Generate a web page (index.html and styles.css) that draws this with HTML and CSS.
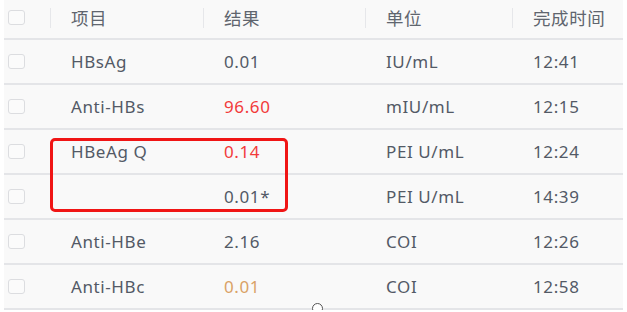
FILE: index.html
```html
<!DOCTYPE html>
<html lang="zh">
<head>
<meta charset="utf-8">
<link rel="stylesheet" href="styles.css">
</head>
<body>
<div class="table">
  <div class="row head">
    <div class="cell chk"><span class="box"></span></div>
    <div class="cell sep">项目</div>
    <div class="cell sep">结果</div>
    <div class="cell sep">单位</div>
    <div class="cell sep">完成时间</div>
  </div>
  <div class="row">
    <div class="cell chk"><span class="box"></span></div>
    <div class="cell">HBsAg</div>
    <div class="cell">0.01</div>
    <div class="cell">IU/mL</div>
    <div class="cell">12:41</div>
  </div>
  <div class="row">
    <div class="cell chk"><span class="box"></span></div>
    <div class="cell">Anti-HBs</div>
    <div class="cell red">96.60</div>
    <div class="cell">mIU/mL</div>
    <div class="cell">12:15</div>
  </div>
  <div class="row">
    <div class="cell chk"><span class="box"></span></div>
    <div class="cell">HBeAg Q</div>
    <div class="cell red">0.14</div>
    <div class="cell">PEI U/mL</div>
    <div class="cell">12:24</div>
  </div>
  <div class="row">
    <div class="cell chk"><span class="box"></span></div>
    <div class="cell"></div>
    <div class="cell">0.01*</div>
    <div class="cell">PEI U/mL</div>
    <div class="cell">14:39</div>
  </div>
  <div class="row">
    <div class="cell chk"><span class="box"></span></div>
    <div class="cell">Anti-HBe</div>
    <div class="cell">2.16</div>
    <div class="cell">COI</div>
    <div class="cell">12:26</div>
  </div>
  <div class="row">
    <div class="cell chk"><span class="box"></span></div>
    <div class="cell">Anti-HBc</div>
    <div class="cell orange">0.01</div>
    <div class="cell">COI</div>
    <div class="cell">12:58</div>
  </div>
  <div class="highlight"></div>
  <div class="cursor"></div>
</div>
</body>
</html>
```
FILE: styles.css
```css
html, body {
  margin: 0;
  padding: 0;
  background: #ffffff;
}
body {
  font-family: "Noto Sans", "Open Sans", "Noto Sans CJK SC", sans-serif;
  font-size: 17px;
  letter-spacing: 0.6px;
  color: #535a66;
  overflow: hidden;
}
.table {
  position: relative;
  margin-left: 4px;
  width: 619px;
  background: #f9f9f9;
}
.row {
  display: grid;
  grid-template-columns: 46px 153px 162px 147px 111px;
  height: 45px;
  border-bottom: 2px solid #e4e5e8;
  box-sizing: border-box;
}
.row.head {
  height: 40px;
  color: #60656e;
  font-size: 17.5px;
  letter-spacing: 0.6px;
}
.cell {
  display: flex;
  align-items: center;
  padding-left: 21px;
  white-space: nowrap;
  position: relative;
}
.head .cell {
  padding-bottom: 3px;
}
.cell.chk {
  padding-left: 4px;
}
.box {
  width: 17px;
  height: 15px;
  border: 1.5px solid #dcdde0;
  border-radius: 3px;
  background: #fbfbfb;
  box-sizing: border-box;
}
.head .sep::before {
  content: "";
  position: absolute;
  left: 0;
  top: 8px;
  height: 20px;
  width: 1px;
  background: #e6e7ea;
}
.red {
  color: #f23b3b;
}
.orange {
  color: #d9a266;
}
.highlight {
  position: absolute;
  left: 46px;
  top: 138px;
  width: 238px;
  height: 74px;
  border: 3px solid #f01515;
  border-radius: 5px;
  box-sizing: border-box;
}
.cursor {
  position: absolute;
  left: 308px;
  top: 303px;
  width: 11px;
  height: 11px;
  border: 1.5px solid #555;
  border-radius: 50%;
  box-sizing: border-box;
  background: #fff;
}
```
